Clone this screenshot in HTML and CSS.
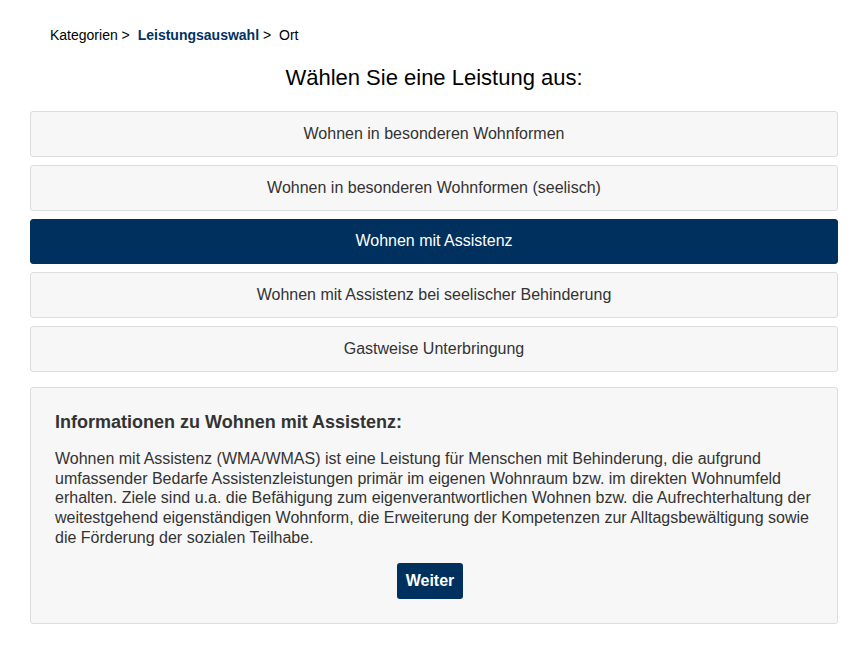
FILE: index.html
```html
<!DOCTYPE html>
<html lang="de">
<head>
    <meta charset="UTF-8">
    <meta name="viewport" content="width=device-width, initial-scale=1.0">
    <title>Leistungsauswahl</title>
    <link rel="stylesheet" href="styles.css">
</head>
<body>
<div class="page">
    <div class="breadcrumb">
        <span class="crumb">Kategorien &gt;</span>
        <span class="crumb"><a href="#" class="crumb-active">Leistungsauswahl</a> &gt;</span>
        <span class="crumb">Ort</span>
    </div>

    <h1 class="title">Wählen Sie eine Leistung aus:</h1>

    <div class="choices">
        <button class="choice">Wohnen in besonderen Wohnformen</button>
        <button class="choice">Wohnen in besonderen Wohnformen (seelisch)</button>
        <button class="choice selected">Wohnen mit Assistenz</button>
        <button class="choice">Wohnen mit Assistenz bei seelischer Behinderung</button>
        <button class="choice">Gastweise Unterbringung</button>
    </div>

    <div class="info">
        <h2>Informationen zu Wohnen mit Assistenz:</h2>
        <p>Wohnen mit Assistenz (WMA/WMAS) ist eine Leistung für Menschen mit Behinderung, die aufgrund umfassender Bedarfe Assistenzleistungen primär im eigenen Wohnraum bzw. im direkten Wohnumfeld erhalten. Ziele sind u.a. die Befähigung zum eigenverantwortlichen Wohnen bzw. die Aufrechterhaltung der weitestgehend eigenständigen Wohnform, die Erweiterung der Kompetenzen zur Alltagsbewältigung sowie die Förderung der sozialen Teilhabe.</p>
        <div class="actions">
            <button class="next">Weiter</button>
        </div>
    </div>
</div>
</body>
</html>
```

FILE: styles.css
```css
body {
    margin: 0;
    font-family: "Liberation Sans", Arial, sans-serif;
    color: #333;
    background: #fff;
}

.page {
    width: 808px;
    margin-left: 30px;
    padding-top: 27px;
}

.breadcrumb {
    padding-left: 20px;
    font-size: 14px;
    color: #000;
    line-height: 16px;
}

.crumb {
    margin-right: 4px;
}

.crumb-active {
    color: #003263;
    font-weight: bold;
    text-decoration: none;
}

.title {
    margin: 21px 0 0;
    text-align: center;
    font-size: 22px;
    font-weight: normal;
    color: #000;
    line-height: 28px;
}

.choices {
    margin-top: 19px;
    display: flex;
    flex-direction: column;
    gap: 8px;
}

.choice {
    height: 45.75px;
    background: #f7f7f7;
    border: 1px solid #ddd;
    border-radius: 3px;
    font-family: inherit;
    font-size: 16px;
    color: #333;
    cursor: pointer;
}

.choice.selected {
    background: #00305e;
    border-color: #00305e;
    color: #fff;
}

.info {
    margin-top: 15px;
    background: #f7f7f7;
    border: 1px solid #ddd;
    border-radius: 3px;
    padding: 23px 24px 24px;
}

.info h2 {
    margin: 0 0 16px;
    font-size: 18px;
    color: #333;
    line-height: 22px;
}

.info p {
    margin: 0;
    font-size: 16px;
    line-height: 19.8px;
    color: #333;
}

.actions {
    margin-top: 15px;
    text-align: center;
}

.next {
    background: #00305e;
    color: #fff;
    border: none;
    border-radius: 3px;
    font-family: inherit;
    font-weight: bold;
    font-size: 16px;
    padding: 0 9px;
    margin-right: 8px;
    height: 36px;
    cursor: pointer;
}
```
